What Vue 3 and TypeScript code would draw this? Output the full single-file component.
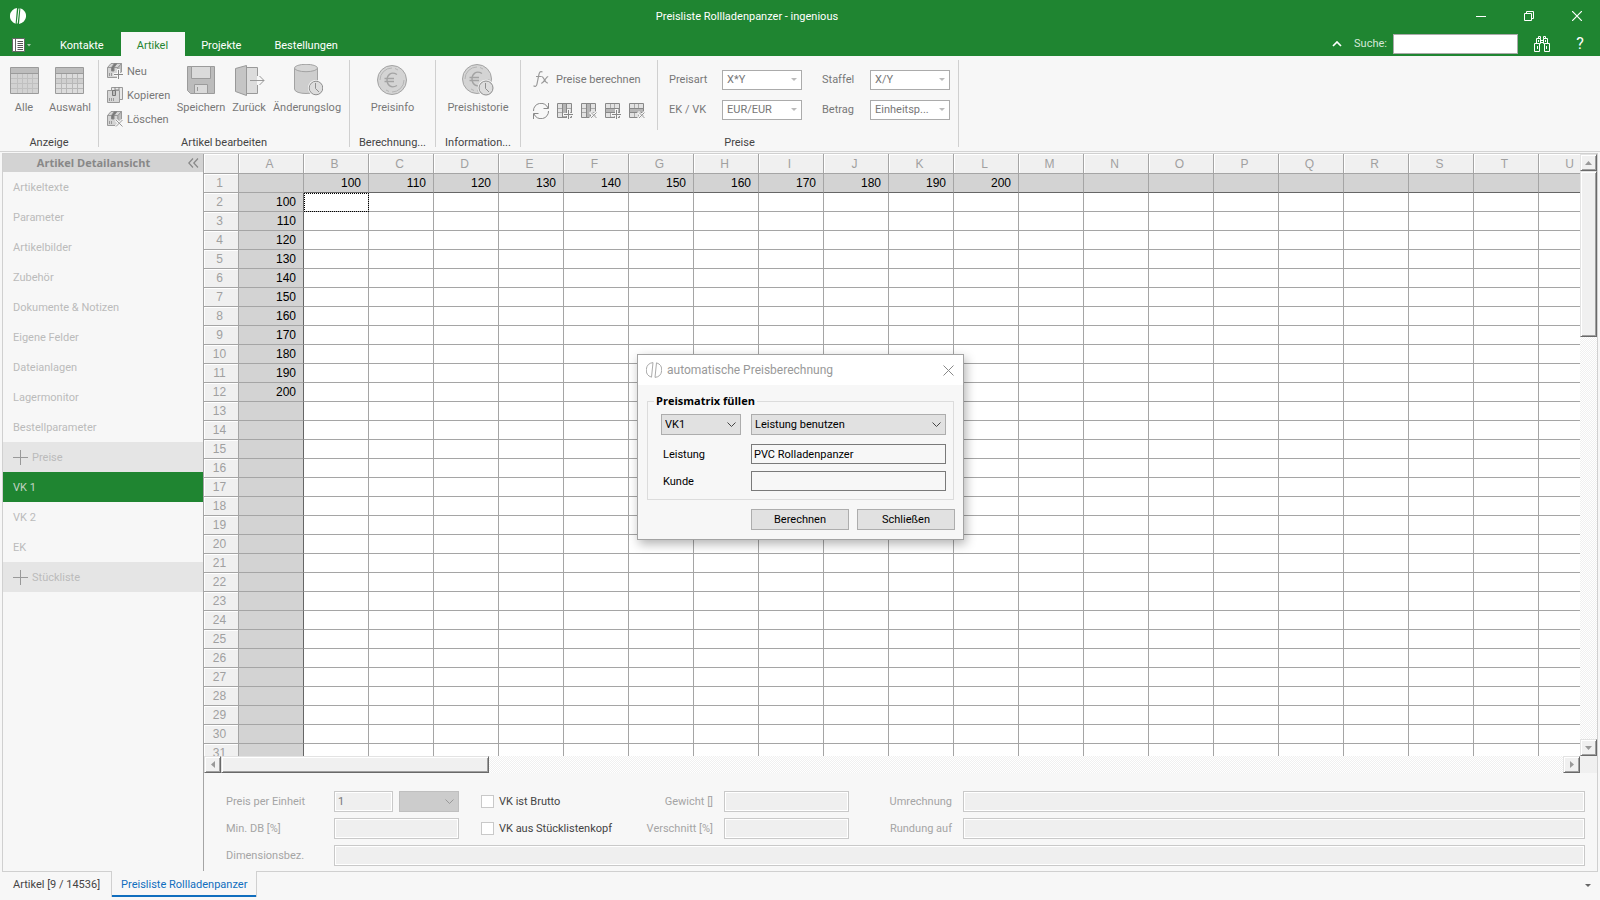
<script setup lang="ts">
import { ref } from 'vue'

const tabs: string[] = ['Kontakte', 'Artikel', 'Projekte', 'Bestellungen']
const activeTab = ref<string>('Artikel')

interface NavItem {
  label: string
  kind?: 'section' | 'active'
}
const navItems: NavItem[] = [
  { label: 'Artikeltexte' },
  { label: 'Parameter' },
  { label: 'Artikelbilder' },
  { label: 'Zubehör' },
  { label: 'Dokumente & Notizen' },
  { label: 'Eigene Felder' },
  { label: 'Dateianlagen' },
  { label: 'Lagermonitor' },
  { label: 'Bestellparameter' },
  { label: 'Preise', kind: 'section' },
  { label: 'VK 1', kind: 'active' },
  { label: 'VK 2' },
  { label: 'EK' },
  { label: 'Stückliste', kind: 'section' },
]

const columns: string[] = 'ABCDEFGHIJKLMNOPQRSTU'.split('')
const rowCount = 31

function cellValue(row: number, col: number): string {
  if (row === 1 && col >= 1 && col <= 11) return String(90 + col * 10)
  if (col === 0 && row >= 2 && row <= 12) return String(80 + row * 10)
  return ''
}

interface PriceChoice {
  id: string
  label: string
  value: string
}
const priceChoices: PriceChoice[] = [
  { id: 'preisart', label: 'Preisart', value: 'X*Y' },
  { id: 'staffel', label: 'Staffel', value: 'X/Y' },
  { id: 'ekvk', label: 'EK / VK', value: 'EUR/EUR' },
  { id: 'betrag', label: 'Betrag', value: 'Einheitsp...' },
]
</script>

<template>
  <div class="app">
    <header class="top">
      <div class="titlebar">
        <svg class="logo" width="16" height="16" viewBox="0 0 16 16">
          <path d="M7 0.1A8 8 0 0 0 5.6 15.7Z M10.4 0.3A8 8 0 0 1 9 15.9Z" fill="#fff" />
          <path d="M8.9 0.5L7.2 15.5" stroke="#fff" stroke-width="1" />
        </svg>
        <h1>Preisliste Rollladenpanzer - ingenious</h1>
        <div class="winctl">
          <button type="button" aria-label="Minimieren">
            <svg width="10" height="10" viewBox="0 0 10 10"><path d="M0 5.5H10" stroke="#fff" /></svg>
          </button>
          <button type="button" aria-label="Wiederherstellen">
            <svg width="10" height="10" viewBox="0 0 10 10" fill="none" stroke="#fff"><path d="M0.5 2.5H7.5V9.5H0.5ZM2.5 2.5V0.5H9.5V7.5H7.5" /></svg>
          </button>
          <button type="button" aria-label="Fenster schließen">
            <svg width="10" height="10" viewBox="0 0 10 10"><path d="M0 0L10 10M10 0L0 10" stroke="#fff" stroke-width="1.2" /></svg>
          </button>
        </div>
      </div>
      <div class="tabrow">
        <button type="button" class="menu" aria-label="Menü">
          <svg width="20" height="14" viewBox="0 0 20 14">
            <path d="M0.5 0.5H12.5V13.5H0.5Z" fill="#fff" stroke="#666" />
            <path d="M3.5 0V14" stroke="#666" />
            <path d="M5.5 3.5H11M5.5 5.5H11M5.5 7.5H11M5.5 9.5H11M5.5 11.5H11" stroke="#555" />
            <path d="M15 6H19L17 8.5Z" fill="#a7c8ab" />
          </svg>
        </button>
        <nav class="tabs">
          <button
            v-for="t in tabs"
            :key="t"
            type="button"
            :class="{ on: t === activeTab }"
            @click="activeTab = t"
          >{{ t }}</button>
        </nav>
        <div class="search">
          <button type="button" class="fold" aria-label="Menüband reduzieren">
            <svg width="10" height="6" viewBox="0 0 10 6"><path d="M1 5L5 1L9 5" fill="none" stroke="#fff" stroke-width="1.7" /></svg>
          </button>
          <label for="suche">Suche:</label>
          <input id="suche" type="text" />
          <button type="button" class="bino" aria-label="Suchen">
            <svg width="16" height="16" viewBox="0 0 16 16" fill="none" stroke="#fff">
              <path d="M0.5 7.5H5.5V15.5H0.5ZM10.5 7.5H15.5V15.5H10.5ZM2.5 7.5V2.5H6.5V7.5H5.5M13.5 7.5V2.5H9.5V7.5H10.5M4.5 2.5V0.5H6.5V2.5M9.5 2.5V0.5H11.5V2.5M6.5 4.5H9.5M6.5 6.5H9.5M3.5 10V13M12.5 10V13M4.5 4V6M11.5 4V6" />
            </svg>
          </button>
          <button type="button" class="help" aria-label="Hilfe">?</button>
        </div>
      </div>
    </header>

    <section class="ribbon">
      <div class="group g-view">
        <div class="body">
          <button type="button" class="big">
            <svg width="32" height="32" viewBox="0 0 32 32">
              <path d="M2.5 3.5H30.5V29.5H2.5Z" fill="#d2d2d2" stroke="#9b9b9b" />
              <path d="M3 4H30V9H3Z" fill="#bdbdbd" /><path d="M3 9.5H30" stroke="#9b9b9b" />
              <path d="M3 14.5H30M3 19.5H30M3 24.5H30M9.5 10V29M14.5 10V29M19.5 10V29M24.5 10V29" stroke="#c0c0c0" />
            </svg>
            <span>Alle</span>
          </button>
          <button type="button" class="big">
            <svg width="32" height="32" viewBox="0 0 32 32">
              <path d="M1.5 3.5H29.5V29.5H1.5Z" fill="#dcdcdc" stroke="#9b9b9b" />
              <path d="M2 4H29V9H2Z" fill="#bdbdbd" /><path d="M2 15H29V19H2Z" fill="#cfcfcf" /><path d="M2 9.5H29" stroke="#9b9b9b" />
              <path d="M2 14.5H29M2 19.5H29M2 24.5H29M7.5 10V29M12.5 10V29M18.5 10V29M23.5 10V29" stroke="#b8b8b8" />
            </svg>
            <span>Auswahl</span>
          </button>
        </div>
        <div class="caption">Anzeige</div>
      </div>

      <div class="group g-edit">
        <div class="body">
          <div class="smalls">
            <button type="button" class="small">
              <svg width="16" height="16" viewBox="0 0 16 16" fill="none" stroke="#999">
                <path d="M0.5 4.5L4 0.5H14.5L11 4.5V14.5H0.5Z" fill="#d4d4d4" /><path d="M11 4.5L14.5 0.5V9L11 12Z" fill="#bdbdbd" /><path d="M0.5 4.5H11" />
                <path d="M4.5 4.5L7.5 0.5H10L7 4.5V8H4.5Z" fill="#777" stroke="#888" /><path d="M2.5 10V13M4.5 10V13" />
                <path d="M11.5 6V16M6.5 11.5H16" stroke="#f7f7f7" stroke-width="3" /><path d="M11.5 7V16M7 11.5H16" stroke="#888" />
              </svg>
              Neu
            </button>
            <button type="button" class="small">
              <svg width="16" height="16" viewBox="0 0 16 16" fill="none" stroke="#999">
                <path d="M4.5 0.5H15.5V12.5H4.5Z" fill="#e8e8e8" /><path d="M8 0V3H12V0" stroke="#888" /><path d="M0.5 3.5H12.5V15.5H0.5Z" fill="#d6d6d6" />
                <path d="M5.5 3.5H8.5V8.5H5.5Z" fill="#bbb" stroke="#777" /><path d="M2.5 11V14M4.5 11V14M6.5 11V14" />
              </svg>
              Kopieren
            </button>
            <button type="button" class="small">
              <svg width="16" height="16" viewBox="0 0 16 16" fill="none" stroke="#999">
                <path d="M0.5 4.5L4 0.5H14.5L11 4.5V14.5H0.5Z" fill="#d4d4d4" /><path d="M11 4.5L14.5 0.5V9L11 12Z" fill="#bdbdbd" /><path d="M0.5 4.5H11" />
                <path d="M4.5 4.5L7.5 0.5H10L7 4.5V8H4.5Z" fill="#777" stroke="#888" /><path d="M2.5 10V13M4.5 10V13" />
                <path d="M9 9L15.5 15.5M15.5 9L9 15.5" stroke="#f7f7f7" stroke-width="3" /><path d="M9 9L15.5 15.5M15.5 9L9 15.5" stroke="#999" />
              </svg>
              Löschen
            </button>
          </div>
          <button type="button" class="big w48">
            <svg width="32" height="32" viewBox="0 0 32 32">
              <path d="M2.5 2.5H29.5V29.5H5.5L2.5 26.5Z" fill="#bcbcbc" stroke="#9b9b9b" />
              <path d="M6.5 2.5H25.5V14.5H6.5Z" fill="#dadada" stroke="#9b9b9b" />
              <path d="M9.5 20.5H22.5V29.5H9.5Z" fill="#dadada" stroke="#9b9b9b" /><path d="M12.5 23V27" stroke="#999" />
            </svg>
            <span>Speichern</span>
          </button>
          <button type="button" class="big w48">
            <svg width="32" height="32" viewBox="0 0 32 32" fill="none" stroke="#999">
              <path d="M13.5 3.5H24.5V12M24.5 21V29.5H13.5" fill="none" /><path d="M14 4H24V29H14Z" fill="#dcdcdc" stroke="none" />
              <path d="M2.5 4.5L13.5 1.5V31.5L2.5 27.5Z" fill="#c5c5c5" /><path d="M25 12V21" stroke="#f7f7f7" stroke-width="2" />
              <path d="M17 16.5H31M26.5 12L31 16.5L26.5 21" />
            </svg>
            <span>Zurück</span>
          </button>
          <button type="button" class="big w68">
            <svg width="32" height="32" viewBox="0 0 32 32" fill="none" stroke="#a3a3a3">
              <path d="M3.5 4V25C3.5 31 26.5 31 26.5 25V4" fill="#cecece" /><ellipse cx="15" cy="4" rx="11.5" ry="3.7" fill="#d6d6d6" />
              <circle cx="25" cy="24" r="8" fill="#f7f7f7" stroke="none" /><circle cx="25" cy="24" r="6.8" fill="#ddd" stroke="#8e8e8e" /><path d="M24.5 19V24.5L28 28" stroke="#8e8e8e" />
            </svg>
            <span>Änderungslog</span>
          </button>
        </div>
        <div class="caption">Artikel bearbeiten</div>
      </div>

      <div class="group g-calc">
        <div class="body">
          <button type="button" class="big wfull">
            <svg width="32" height="32" viewBox="0 0 32 32" fill="none" stroke="#a3a3a3">
              <circle cx="15" cy="16" r="14.5" fill="#d4d4d4" /><path d="M3 16A12 12 0 0 1 15 4M27 16A12 12 0 0 1 15 28M18 4.5L21 6M12 27.5L9 26" stroke="#b5b5b5" />
              <path d="M20 10.5C14 7 10 11 10 16S14 25 20 21.5M7.5 14.5H17M7.5 17.5H17" stroke-width="1.4" />
            </svg>
            <span>Preisinfo</span>
          </button>
        </div>
        <div class="caption">Berechnung...</div>
      </div>

      <div class="group g-info">
        <div class="body">
          <button type="button" class="big wfull">
            <svg width="32" height="32" viewBox="0 0 32 32" fill="none" stroke="#a3a3a3">
              <circle cx="15" cy="15" r="14.5" fill="#d4d4d4" /><path d="M3 15A12 12 0 0 1 15 3M27 15A12 12 0 0 1 15 27M18 3.5L21 5M12 26.5L9 25" stroke="#b5b5b5" />
              <path d="M20 9.5C14 6 10 10 10 15S14 24 20 20.5M7.5 13.5H17M7.5 16.5H17" stroke-width="1.4" />
              <circle cx="24" cy="24" r="8.3" fill="#f7f7f7" stroke="none" /><circle cx="24" cy="24" r="7" fill="#ddd" stroke="#8e8e8e" /><path d="M23.5 19V24.5L27 28" stroke="#8e8e8e" />
            </svg>
            <span>Preishistorie</span>
          </button>
        </div>
        <div class="caption">Information...</div>
      </div>

      <div class="group g-price">
        <div class="body">
          <div class="tools">
            <button type="button" class="small fx">
              <svg width="16" height="16" viewBox="0 0 16 16" fill="none" stroke="#999">
                <path d="M9.5 1C7 -0.2 6.3 1.5 5.8 4L4 13C3.5 15.5 2 15.8 0.5 14.8M3 5.5H8.5" stroke-width="1.2" /><path d="M8.5 5.5C11 5 11.5 12.5 15 12M15.2 5.5C13 5.5 11 12 8.3 12.3" stroke-width="1.2" />
              </svg>
              Preise berechnen
            </button>
            <div class="toolrow">
              <button type="button" aria-label="Aktualisieren">
                <svg width="16" height="16" viewBox="0 0 16 16" fill="none" stroke="#888"><path d="M0.5 8A7.5 7.3 0 0 1 15 5M15.5 0V5.5H10.5M15.5 8A7.5 7.3 0 0 1 1 11M0.5 16V10.5H5.5" /></svg>
              </button>
              <button type="button" aria-label="Spalte einfügen">
                <svg width="16" height="16" viewBox="0 0 16 16" fill="none" stroke="#888"><path d="M0.5 0.5H14.5V14.5H0.5Z" fill="#e2e2e2" /><path d="M1 5.5H14M1 9.5H14" stroke="#aaa" /><path d="M5.5 0.5H9.5V14.5H5.5Z" fill="#b5b5b5" /><path d="M11.5 6V16M6 11.5H16" stroke="#f7f7f7" stroke-width="3" /><path d="M11.5 7V16M7 11.5H16" /></svg>
              </button>
              <button type="button" aria-label="Spalte löschen">
                <svg width="16" height="16" viewBox="0 0 16 16" fill="none" stroke="#888"><path d="M0.5 0.5H14.5V14.5H0.5Z" fill="#e2e2e2" /><path d="M1 5.5H14M1 9.5H14" stroke="#aaa" /><path d="M5.5 0.5H9.5V14.5H5.5Z" fill="#b5b5b5" /><path d="M9 9L16 16M16 9L9 16" stroke="#f7f7f7" stroke-width="3" /><path d="M10 9.5L15.5 15M15.5 9.5L10 15" stroke="#999" /></svg>
              </button>
              <button type="button" aria-label="Zeile einfügen">
                <svg width="16" height="16" viewBox="0 0 16 16" fill="none" stroke="#888"><path d="M0.5 0.5H14.5V14.5H0.5Z" fill="#e2e2e2" /><path d="M5.5 1V14M9.5 1V14" stroke="#aaa" /><path d="M0.5 5.5H14.5V9.5H0.5Z" fill="#b5b5b5" /><path d="M11.5 6V16M6 11.5H16" stroke="#f7f7f7" stroke-width="3" /><path d="M11.5 7V16M7 11.5H16" /></svg>
              </button>
              <button type="button" aria-label="Zeile löschen">
                <svg width="16" height="16" viewBox="0 0 16 16" fill="none" stroke="#888"><path d="M0.5 0.5H14.5V14.5H0.5Z" fill="#e2e2e2" /><path d="M5.5 1V14M9.5 1V14" stroke="#aaa" /><path d="M0.5 5.5H14.5V9.5H0.5Z" fill="#b5b5b5" /><path d="M9 9L16 16M16 9L9 16" stroke="#f7f7f7" stroke-width="3" /><path d="M10 9.5L15.5 15M15.5 9.5L10 15" stroke="#999" /></svg>
              </button>
            </div>
          </div>
          <div class="choices">
            <template v-for="c in priceChoices" :key="c.id">
              <label :for="c.id">{{ c.label }}</label>
              <span class="select">
                <select :id="c.id" disabled><option>{{ c.value }}</option></select>
                <svg width="6" height="3" viewBox="0 0 6 3"><path d="M0 0H6L3 3Z" fill="#bbb" /></svg>
              </span>
            </template>
          </div>
        </div>
        <div class="caption">Preise</div>
      </div>
    </section>

    <main class="frame">
      <aside class="side">
        <div class="side-head">
          <h2>Artikel Detailansicht</h2>
          <button type="button" aria-label="Leiste einklappen">
            <svg width="11" height="10" viewBox="0 0 11 10"><path d="M5 0.5L0.8 5L5 9.5M10 0.5L5.8 5L10 9.5" fill="none" stroke="#888" stroke-width="1.2" /></svg>
          </button>
        </div>
        <a v-for="n in navItems" :key="n.label" href="#" :class="['nav', n.kind]">
          <svg v-if="n.kind === 'section'" width="15" height="15" viewBox="0 0 15 15"><path d="M7.5 0V15M0 7.5H15" stroke="#999" /></svg>
          {{ n.label }}
        </a>
      </aside>

      <section class="content">
        <div class="sheet">
          <div class="cells">
            <table>
              <colgroup>
                <col class="c-num" />
                <col v-for="c in columns" :key="c" class="c-val" />
              </colgroup>
              <thead>
                <tr>
                  <th></th>
                  <th v-for="c in columns" :key="c" scope="col">{{ c }}</th>
                </tr>
              </thead>
              <tbody>
                <tr v-for="r in rowCount" :key="r">
                  <th scope="row">{{ r }}</th>
                  <td
                    v-for="(c, i) in columns"
                    :key="c"
                    :class="{ fixed: r === 1 || i === 0, low: r === 1 && i > 0, edge: i === 0 && r > 1, focus: r === 2 && i === 1 }"
                  >{{ cellValue(r, i) }}</td>
                </tr>
              </tbody>
            </table>
          </div>
          <div class="vbar">
            <button type="button" class="sb" aria-label="Nach oben"><svg width="7" height="4" viewBox="0 0 7 4"><path d="M0 4H7L3.5 0Z" fill="#999" /></svg></button>
            <div class="thumb"></div>
            <button type="button" class="sb end" aria-label="Nach unten"><svg width="7" height="4" viewBox="0 0 7 4"><path d="M0 0H7L3.5 4Z" fill="#999" /></svg></button>
          </div>
          <div class="hbar">
            <button type="button" class="sb" aria-label="Nach links"><svg width="4" height="7" viewBox="0 0 4 7"><path d="M4 0V7L0 3.5Z" fill="#999" /></svg></button>
            <div class="thumb"></div>
            <button type="button" class="sb end" aria-label="Nach rechts"><svg width="4" height="7" viewBox="0 0 4 7"><path d="M0 0V7L4 3.5Z" fill="#999" /></svg></button>
          </div>
          <div class="corner"></div>
        </div>

        <form class="details" @submit.prevent>
          <label for="ppe">Preis per Einheit</label>
          <div class="pair">
            <input id="ppe" type="text" value="1" disabled />
            <span class="select">
              <select aria-label="Einheit" disabled></select>
              <svg width="9" height="5" viewBox="0 0 9 5"><path d="M0.5 0.5L4.5 4.5L8.5 0.5" fill="none" stroke="#999" /></svg>
            </span>
          </div>
          <label class="check"><input type="checkbox" />VK ist Brutto</label>
          <label class="right" for="gew">Gewicht []</label>
          <input id="gew" type="text" disabled />
          <label class="right" for="umr">Umrechnung</label>
          <input id="umr" type="text" disabled />

          <label for="mindb">Min. DB [%]</label>
          <input id="mindb" type="text" disabled />
          <label class="check"><input type="checkbox" />VK aus Stücklistenkopf</label>
          <label class="right" for="ver">Verschnitt [%]</label>
          <input id="ver" type="text" disabled />
          <label class="right" for="rund">Rundung auf</label>
          <input id="rund" type="text" disabled />

          <label for="dim">Dimensionsbez.</label>
          <input id="dim" class="wide" type="text" disabled />
        </form>
      </section>
    </main>

    <footer class="docs">
      <button type="button">Artikel [9 / 14536]</button>
      <button type="button" class="on">Preisliste Rollladenpanzer</button>
      <div class="rest">
        <svg width="6" height="3" viewBox="0 0 6 3"><path d="M0 0H6L3 3Z" fill="#666" /></svg>
      </div>
    </footer>

    <div class="dialog" role="dialog" aria-labelledby="dlg-title">
      <div class="dlg-head">
        <svg width="16" height="16" viewBox="0 0 16 16" fill="none" stroke="#aaa">
          <path d="M7 0.6A7.5 7.5 0 0 0 5.5 15.2Z M10.5 0.8A7.5 7.5 0 0 1 9 15.4Z" />
        </svg>
        <h2 id="dlg-title">automatische Preisberechnung</h2>
        <button type="button" aria-label="Dialog schließen">
          <svg width="11" height="11" viewBox="0 0 11 11"><path d="M0.5 0.5L10.5 10.5M10.5 0.5L0.5 10.5" stroke="#888" /></svg>
        </button>
      </div>
      <fieldset>
        <legend>Preismatrix füllen</legend>
        <span class="select first">
          <select aria-label="Verkaufspreis"><option>VK1</option></select>
          <svg width="9" height="5" viewBox="0 0 9 5"><path d="M0.5 0.5L4.5 4.5L8.5 0.5" fill="none" stroke="#444" /></svg>
        </span>
        <span class="select">
          <select aria-label="Berechnungsart"><option>Leistung benutzen</option></select>
          <svg width="9" height="5" viewBox="0 0 9 5"><path d="M0.5 0.5L4.5 4.5L8.5 0.5" fill="none" stroke="#444" /></svg>
        </span>
        <label for="leistung">Leistung</label>
        <input id="leistung" type="text" value="PVC Rolladenpanzer" />
        <label for="kunde">Kunde</label>
        <input id="kunde" type="text" />
      </fieldset>
      <div class="dlg-actions">
        <button type="button">Berechnen</button>
        <button type="button">Schließen</button>
      </div>
    </div>
  </div>
</template>

<style>
html,
body {
  margin: 0;
  background: #f7f7f7;
}
</style>

<style scoped>
* {
  box-sizing: border-box;
}
.app {
  position: relative;
  display: flex;
  flex-direction: column;
  height: 100vh;
  background: #f7f7f7;
  font: 11px/14px Roboto, "Noto Sans", sans-serif;
  color: #444;
}
button,
input,
select {
  font: inherit;
  color: inherit;
  margin: 0;
}
button {
  padding: 0;
  border: 0;
  background: none;
  white-space: nowrap;
}
svg {
  display: block;
  flex: none;
}
h1,
h2 {
  margin: 0;
  font-size: inherit;
  font-weight: normal;
}

/* title bar and tabs */
.top {
  background: #1f8531;
  color: #fff;
}
.titlebar {
  display: grid;
  grid-template-columns: 1fr auto 1fr;
  align-items: center;
  height: 32px;
}
.logo {
  margin-left: 10px;
}
.titlebar h1 {
  margin-right: 106px;
  padding-top: 2px;
}
.winctl {
  display: flex;
  justify-content: flex-end;
  height: 32px;
}
.winctl button {
  display: grid;
  place-items: center;
  width: 48px;
}
.winctl button:last-child {
  width: 47px;
}
.tabrow {
  display: flex;
  height: 24px;
}
.menu {
  width: 43px;
  padding: 2px 0 0 12px;
}
.tabs {
  display: flex;
  flex: 1;
}
.tabs button {
  padding: 3px 17px 0 16px;
}
.tabs button:first-child {
  padding-left: 17px;
}
.tabs .on {
  background: #f7f7f7;
  color: #1f8531;
}
.search {
  display: flex;
  align-items: center;
}
.fold {
  margin-right: 12px;
}
.search label {
  color: #d5e8d8;
  margin-right: 6px;
}
.search input {
  width: 125px;
  height: 20px;
  padding: 0 4px;
  border: 1px solid #aaa;
  background: #fff;
  color: #222;
}
.bino {
  margin-left: 16px;
}
.help {
  width: 50px;
  padding-left: 10px;
  font-size: 16px;
}

/* ribbon */
.ribbon {
  display: flex;
  height: 96px;
  padding: 4px 0;
  border-bottom: 1px solid #d3d3d3;
  color: #777;
}
.group {
  display: flex;
  flex-direction: column;
  border-right: 1px solid #d0d0d0;
}
.body {
  display: flex;
  flex: none;
  height: 76px;
}
.caption {
  flex: none;
  text-align: center;
  color: #444;
}
.g-view {
  width: 99px;
}
.g-view .body {
  padding-left: 1px;
}
.g-edit {
  width: 251px;
}
.g-calc {
  width: 86px;
}
.g-info {
  width: 85px;
}
.g-price {
  width: 438px;
}
.big {
  display: flex;
  flex-direction: column;
  align-items: center;
  width: 46px;
  padding-top: 4px;
  gap: 5px;
}
.w48 {
  width: 48px;
}
.w68 {
  width: 68px;
}
.wfull {
  width: 100%;
}
.smalls {
  display: flex;
  flex-direction: column;
  width: 78px;
  padding: 3px 0 0 8px;
  gap: 8px;
}
.small {
  display: flex;
  align-items: center;
  height: 16px;
  padding-top: 2px;
  gap: 4px;
}
.small svg,
.nav svg {
  margin-top: -2px;
}
.tools {
  height: 70px;
  width: 137px;
  padding: 11px 0 0 12px;
  border-right: 1px solid #d0d0d0;
}
.fx {
  gap: 7px;
}
.toolrow {
  display: flex;
  gap: 8px;
  margin-top: 16px;
}
.choices {
  display: grid;
  grid-template-columns: 53px 80px 68px 80px;
  grid-template-rows: 20px 20px;
  row-gap: 10px;
  align-items: center;
  height: 60px;
  padding: 10px 0 0 11px;
}
.choices label:nth-of-type(even) {
  padding-left: 20px;
}
.select {
  position: relative;
  display: block;
}
.select select {
  display: block;
  width: 100%;
  height: 20px;
  padding: 0 4px;
  border: 1px solid #ababab;
  border-radius: 0;
  background: #fff;
  appearance: none;
  opacity: 1;
}
.select svg {
  position: absolute;
  right: 5px;
  top: 8px;
  pointer-events: none;
}

/* frame */
.frame {
  display: flex;
  flex: 1;
  min-height: 0;
  margin: 1px 2px 0;
  border: 1px solid #d0d0d0;
  border-bottom: 0;
}
.side {
  width: 201px;
  flex: none;
  border-right: 1px solid #a5a5a5;
}
.side-head {
  display: flex;
  align-items: center;
  height: 18px;
  padding: 0 4px 0 10px;
  background: #d3d3d3;
}
.side-head h2 {
  flex: 1;
  padding-right: 14px;
  font: bold 11px/14px "Open Sans", "Noto Sans", sans-serif;
  text-align: center;
  color: #888;
}
.nav {
  display: flex;
  align-items: center;
  gap: 4px;
  height: 30px;
  padding: 2px 0 0 10px;
  color: #bbb;
  text-decoration: none;
}
.nav.section {
  background: #e5e5e5;
}
.nav.active {
  background: #1f8531;
  color: #c3d3c5;
}
.content {
  display: flex;
  flex-direction: column;
  flex: 1;
  min-width: 0;
}
.sheet {
  display: grid;
  flex: 1;
  grid-template-columns: minmax(0, 1fr) 17px;
  grid-template-rows: minmax(0, 1fr) 17px;
  min-height: 0;
}
.cells {
  overflow: hidden;
  background: #fff;
}
table {
  width: 1400px;
  table-layout: fixed;
  border-collapse: separate;
  border-spacing: 0;
  font: 12px/17px "Liberation Sans Narrow", "Liberation Sans", Arial, sans-serif;
}
.c-num {
  width: 35px;
}
.c-val {
  width: 65px;
}
th,
td {
  height: 19px;
  padding: 0;
  border: solid #a5a5a5;
  border-width: 0 1px 1px 0;
}
th {
  padding: 1px 3px 0 0;
  background: #f0f0f0;
  box-shadow: inset 1px 1px #fff;
  font-weight: normal;
  text-align: center;
  color: #a0a0a0;
}
thead th {
  height: 20px;
}
td {
  padding-right: 7px;
  text-align: right;
  color: #000;
}
.fixed {
  background: #d3d3d3;
}
.low {
  border-bottom-color: #666;
}
.edge {
  border-right-color: #666;
}
.focus {
  outline: 1px dotted #000;
  outline-offset: -1px;
}
.vbar,
.hbar {
  display: flex;
  background: repeating-conic-gradient(#f0f0f0 0 25%, #fff 0 50%) 0 0 / 2px 2px;
}
.vbar {
  flex-direction: column;
}
.corner {
  background: #f0f0f0;
}
.sb {
  display: grid;
  place-items: center;
  width: 17px;
  height: 17px;
}
.sb,
.thumb {
  border: 1px solid;
  border-color: #e3e3e3 #696969 #696969 #e3e3e3;
  background: #f0f0f0;
  box-shadow: inset 1px 1px #fff, inset -1px -1px #a0a0a0;
}
.end {
  margin-top: auto;
}
.hbar .end {
  margin: 0 0 0 auto;
}
.vbar .thumb {
  height: 166px;
}
.hbar .thumb {
  width: 268px;
}

/* article details */
.details {
  display: grid;
  flex: none;
  grid-template-columns: 108px 125px 22px 124px 108px 11px 125px 103px 11px 1fr;
  grid-template-rows: 21px 21px 21px;
  row-gap: 6px;
  align-items: center;
  padding: 18px 12px 5px 22px;
  color: #a5a5a5;
}
.details .check {
  display: flex;
  align-items: center;
  grid-column: 4;
  gap: 5px;
  color: #444;
  white-space: nowrap;
}
.details .right {
  text-align: right;
}
.details #gew,
.details #ver {
  grid-column: 7;
}
.details #umr,
.details #rund {
  grid-column: 10;
}
.details .wide {
  grid-column: 2 / -1;
}
.details input[type='text'] {
  width: 100%;
  min-width: 0;
  height: 21px;
  padding: 0 3px;
  border: 1px solid #c9c9c9;
  box-shadow: inset 0 0 0 1px #fff;
  background: #efefef;
  color: #777;
}
.details input[type='checkbox'] {
  flex: none;
  width: 13px;
  height: 13px;
  border: 1px solid #c9c9c9;
  background: #fff;
  appearance: none;
}
.pair {
  display: grid;
  grid-template-columns: 59px 60px;
  gap: 6px;
}
.pair .select select {
  height: 21px;
  border-color: #bfbfbf;
  background: #ccc;
}

/* document tabs */
.docs {
  display: flex;
  height: 29px;
  padding: 0 2px 3px;
}
.docs button {
  padding: 0 11px;
  border-top: 1px solid #d0d0d0;
}
.docs .on {
  padding: 2px 9px 0;
  border: solid #d0d0d0;
  border-width: 0 1px;
  box-shadow: inset 0 -2px #106ebe;
  color: #106ebe;
}
.rest {
  display: flex;
  flex: 1;
  justify-content: flex-end;
  align-items: center;
  padding: 2px 7px 0 0;
  border-top: 1px solid #d0d0d0;
}

/* price dialog */
.dialog {
  position: absolute;
  left: 637px;
  top: 354px;
  width: 327px;
  padding-bottom: 9px;
  border: 1px solid #a3a3a3;
  background: #f7f7f7;
  box-shadow: 2px 4px 10px rgba(0, 0, 0, 0.3);
  color: #000;
}
.dlg-head {
  display: flex;
  align-items: center;
  gap: 5px;
  height: 30px;
  padding: 0 9px 0 8px;
  background: #fff;
  color: #999;
}
.dlg-head h2 {
  flex: 1;
  font-size: 12px;
}
fieldset {
  display: grid;
  grid-template-columns: 90px 1fr;
  grid-template-rows: 23px 20px 20px;
  row-gap: 7px;
  align-items: center;
  margin: 9px 9px 0;
  padding: 6px 7px 8px 13px;
  border: 1px solid #dcdcdc;
}
legend {
  margin-left: -7px;
  padding: 0 2px;
  font: bold 11px/14px "Open Sans", "Noto Sans", sans-serif;
}
fieldset .select {
  align-self: start;
}
fieldset .select select {
  height: 21px;
  padding: 0 3px;
  border-color: #adadad;
  background: #e1e1e1;
}
fieldset .first {
  width: 80px;
}
fieldset label {
  padding: 1px 0 0 2px;
}
fieldset input {
  width: 100%;
  height: 20px;
  padding: 0 2px;
  border: 1px solid #7a7a7a;
  background: #f7f7f7;
}
.dlg-actions {
  display: flex;
  justify-content: flex-end;
  gap: 8px;
  margin: 9px 8px 0;
}
.dlg-actions button {
  width: 98px;
  height: 21px;
  padding-top: 1px;
  border: 1px solid #adadad;
  background: #e1e1e1;
}
</style>
